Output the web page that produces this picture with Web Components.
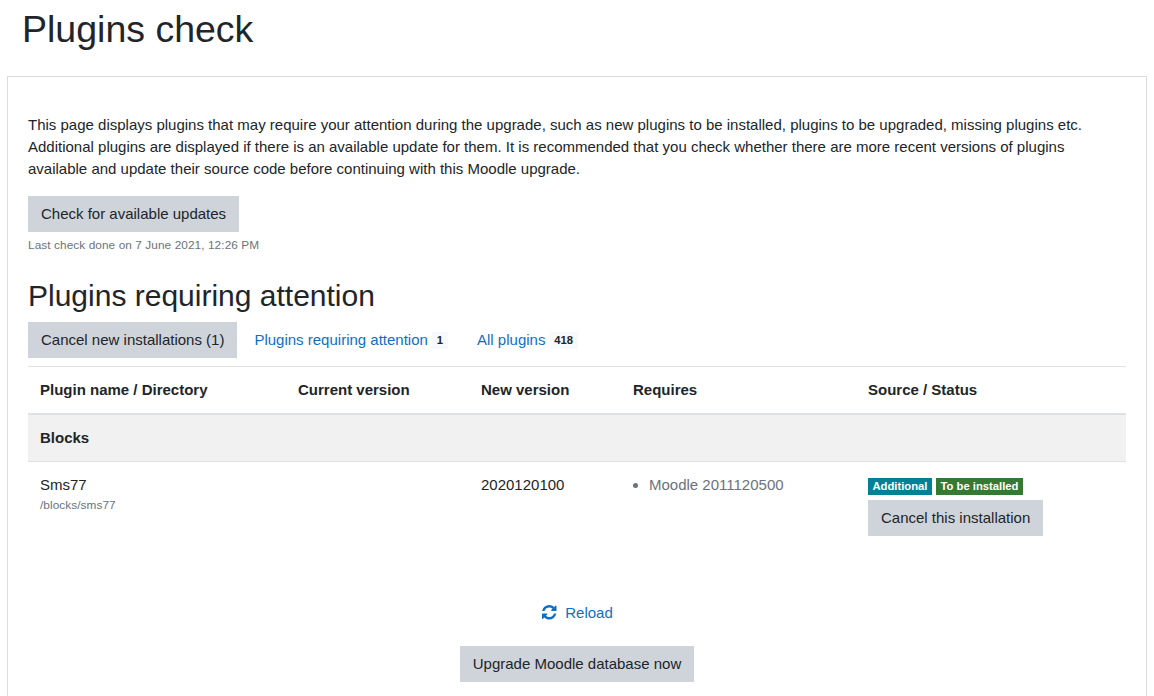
<!DOCTYPE html>
<html lang="en">
<head>
<meta charset="utf-8">
<title>Plugins check</title>
<style>
body{margin:0;background:#fff;color:#212529;font:15px/22px "Liberation Sans",Arial,sans-serif;height:696px;overflow:hidden}
</style>
</head>
<body>
<plugins-page></plugins-page>
<script>
const define = (name, html) => customElements.define(name, class extends HTMLElement {
  constructor() {
    super();
    this.attachShadow({mode: 'open'}).innerHTML = html;
  }
});

define('md-button', `<style>
:host{display:inline-block;vertical-align:top}
button{display:block;font:inherit;color:#212529;background:#ced4da;border:0;height:36px;padding:0 13px;line-height:36px;white-space:nowrap}
</style><button><slot></slot></button>`);

define('md-badge', `<style>
:host{display:inline-block;box-sizing:border-box;height:17px;padding:0 4.5px;font-size:11.25px;font-weight:700;line-height:17px;color:#212529;background:#f8f9fa;white-space:nowrap}
:host([kind=info]){background:#008196;color:#fff}
:host([kind=success]){background:#357a32;color:#fff}
</style><slot></slot>`);

define('md-link', `<style>
:host{display:inline-flex;align-items:center;color:#0f6fc5;white-space:nowrap}
a{color:inherit;text-decoration:none}
</style><a><slot></slot></a><slot name="badge"></slot>`);

define('refresh-icon', `<style>
:host{display:block;width:14.5px;height:14.5px}
svg{display:block;width:100%;height:100%;fill:currentColor}
</style><svg viewBox="0 0 1536 1536"><path d="M1511 928q0 5-1 7-64 268-268 434.500t-478 166.500q-146 0-282.500-55t-243.500-157l-129 129q-19 19-45 19t-45-19-19-45v-448q0-26 19-45t45-19h448q26 0 45 19t19 45-19 45l-137 137q71 66 161 102t187 36q134 0 250-65t186-179q11-17 53-117 8-23 30-23h192q13 0 22.500 9.500t9.500 22.500zm25-800v448q0 26-19 45t-45 19h-448q-26 0-45-19t-19-45 19-45l138-138q-148-137-349-137-134 0-250 65t-186 179q-11 17-53 117-8 23-30 23h-199q-13 0-22.500-9.500t-9.500-22.500v-7q65-268 270-434.500t480-166.500q146 0 284 55.500t245 156.500l130-129q19-19 45-19t45 19 19 45z"/></svg>`);

define('plugin-row', `<style>
:host{display:grid;grid-template-columns:258px 183px 152px 235px 270px;box-sizing:border-box;border-top:1px solid #dee2e6}
:host([kind=head]){height:47px;font-weight:700;line-height:46px}
:host([kind=type]){height:48px;border-top-width:2px;font-weight:700;line-height:46px;background:#f1f1f1}
:host([kind=item]){padding-top:12px}
::slotted(*){padding-left:12px}
</style><slot></slot>`);

define('plugins-table', `<style>
:host{display:block}
.dir{font-size:11.8px;letter-spacing:.07px;line-height:18px;color:#6a737b}
ul{margin:0;padding:0;list-style:none;color:#6a737b}
li{display:flex;align-items:center}
li::before{content:"";width:5px;height:5px;border-radius:50%;background:#6a737b;margin-right:11px}
.badges{display:flex;gap:4px;padding-top:4px;margin-bottom:5px}
</style>
<plugin-row kind="head"><div>Plugin name / Directory</div><div>Current version</div><div>New version</div><div>Requires</div><div>Source / Status</div></plugin-row>
<plugin-row kind="type"><div>Blocks</div></plugin-row>
<plugin-row kind="item">
<div><div>Sms77</div><div class="dir">/blocks/sms77</div></div>
<div></div>
<div>2020120100</div>
<div><ul><li>Moodle 2011120500</li></ul></div>
<div><div class="badges"><md-badge kind="info">Additional</md-badge><md-badge kind="success">To be installed</md-badge></div><md-button>Cancel this installation</md-button></div>
</plugin-row>`);

define('plugins-page', `<style>
:host{display:block;height:696px;overflow:hidden}
h1,h2,p{margin:0;font-weight:400}
h1{font-size:37.5px;line-height:44px;padding:7px 0 25px 22px}
main{box-sizing:border-box;width:1140px;margin-left:7px;height:620px;border:1px solid #dcdcdc;border-bottom:0;padding:37px 20px 0}
.intro{margin-bottom:16px;white-space:nowrap}
.last{font-size:11.8px;letter-spacing:.09px;line-height:18px;color:#6a737b;padding-top:4px}
h2{font-size:30px;line-height:36px;padding:24px 0 8px}
.tools{display:flex;align-items:center;height:36px;margin-bottom:8px}
.tools md-link:nth-of-type(1){margin:0 29.5px 0 17px}
md-badge{margin-left:4.400px}
.reload{display:flex;justify-content:center;align-items:center;margin-top:66px}
.reload refresh-icon{color:#0f6fc5;margin:0 8.5px 1.5px 1px}
.go{text-align:center;margin-top:22px}
</style>
<h1>Plugins check</h1>
<main>
<p class="intro">This page displays plugins that may require your attention during the upgrade, such as new plugins to be installed, plugins to be upgraded, missing plugins etc.<br>Additional plugins are displayed if there is an available update for them. It is recommended that you check whether there are more recent versions of plugins<br>available and update their source code before continuing with this Moodle upgrade.</p>
<md-button>Check for available updates</md-button>
<div class="last">Last check done on 7 June 2021, 12:26 PM</div>
<h2>Plugins requiring attention</h2>
<div class="tools"><md-button>Cancel new installations (1)</md-button><md-link>Plugins requiring attention<md-badge slot="badge">1</md-badge></md-link><md-link>All plugins<md-badge slot="badge">418</md-badge></md-link></div>
<plugins-table></plugins-table>
<div class="reload"><refresh-icon></refresh-icon><md-link>Reload</md-link></div>
<div class="go"><md-button>Upgrade Moodle database now</md-button></div>
</main>`);
</script>
</body>
</html>
